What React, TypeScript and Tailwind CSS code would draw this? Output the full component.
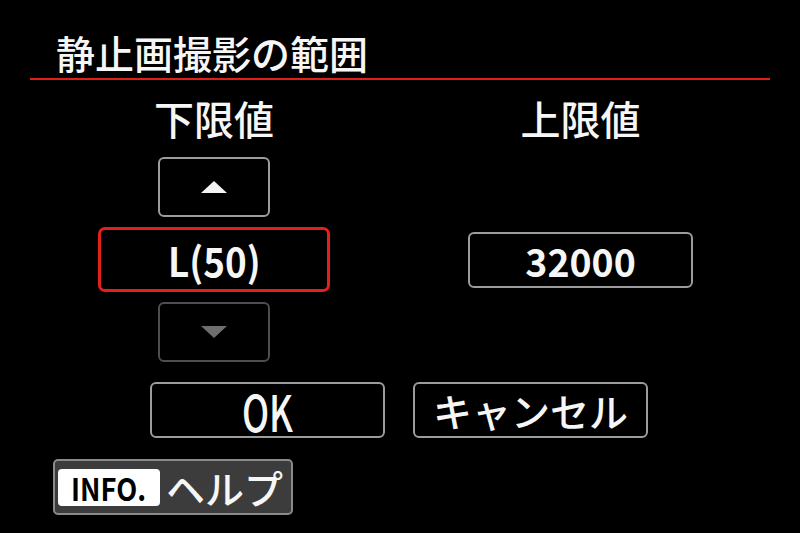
import React from 'react';

function Triangle({ up, color }: { up: boolean; color: string }) {
  return (
    <svg width="26" height="12" viewBox="0 0 26 12">
      <polygon points={up ? '13,0 26,12 0,12' : '0,0 26,0 13,12'} fill={color} />
    </svg>
  );
}

export default function App() {
  return (
    <div className="w-[800px] h-[533px] bg-black text-[#f6f6f6] overflow-hidden font-['Noto_Sans_CJK_JP','Noto_Sans',sans-serif]">
      {/* Title */}
      <div className="pt-[26px] pl-[56px] text-[39px] leading-[52px] font-medium">
        静止画撮影の範囲
      </div>
      <div className="mx-[30px] h-[2px] bg-[#e11f1a]" />

      {/* Columns */}
      <div className="flex">
        {/* Lower limit */}
        <div className="ml-[98px] w-[232px] flex flex-col items-center">
          <div className="mt-[18px] h-[40px] text-[40px] leading-[40px] font-medium">下限値</div>
          <div className="mt-[19px] w-[112px] h-[60px] border-2 border-[#9c9c9c] rounded-[6px] flex items-center justify-center">
            <Triangle up color="#f4f4f4" />
          </div>
          <div className="mt-[10px] w-[232px] h-[65px] border-[3px] border-[#e3201b] rounded-[7px] flex items-center justify-center">
            <span className="inline-block text-[40px] font-bold leading-none scale-x-[0.92]">L(50)</span>
          </div>
          <div className="mt-[10px] w-[112px] h-[60px] border-2 border-[#4e4e4e] rounded-[6px] flex items-center justify-center">
            <Triangle up={false} color="#6e6e6e" />
          </div>
        </div>

        {/* Upper limit */}
        <div className="ml-[138px] w-[225px] flex flex-col items-center">
          <div className="mt-[18px] h-[40px] text-[40px] leading-[40px] font-medium">上限値</div>
          <div className="mt-[94px] w-[225px] h-[56px] border-2 border-[#9c9c9c] rounded-[6px] flex items-center justify-center">
            <span className="inline-block text-[39px] font-bold leading-none scale-x-[0.96]">32000</span>
          </div>
        </div>
      </div>

      {/* OK / Cancel */}
      <div className="mt-[20px] flex">
        <div className="ml-[150px] w-[235px] h-[56px] border-2 border-[#9c9c9c] rounded-[6px] flex items-center justify-center">
          <span className="inline-block text-[50px] leading-none font-medium scale-x-[0.72]">OK</span>
        </div>
        <div className="ml-[28px] w-[235px] h-[56px] border-2 border-[#9c9c9c] rounded-[6px] flex items-center justify-center text-[39px] leading-none font-medium">
          キャンセル
        </div>
      </div>

      {/* Help */}
      <div className="mt-[21px] ml-[53px] w-[240px] h-[56px] bg-[#3c3c3c] border-2 border-[#8a8a8a] rounded-[5px] flex items-center pl-[3px] gap-[6px]">
        <div className="w-[102px] h-[37px] bg-white rounded-[4px] flex items-center justify-center">
          <span className="inline-block text-black text-[31px] font-semibold leading-none scale-x-[0.88]">INFO.</span>
        </div>
        <span className="text-[39px] leading-none font-medium">ヘルプ</span>
      </div>
    </div>
  );
}
